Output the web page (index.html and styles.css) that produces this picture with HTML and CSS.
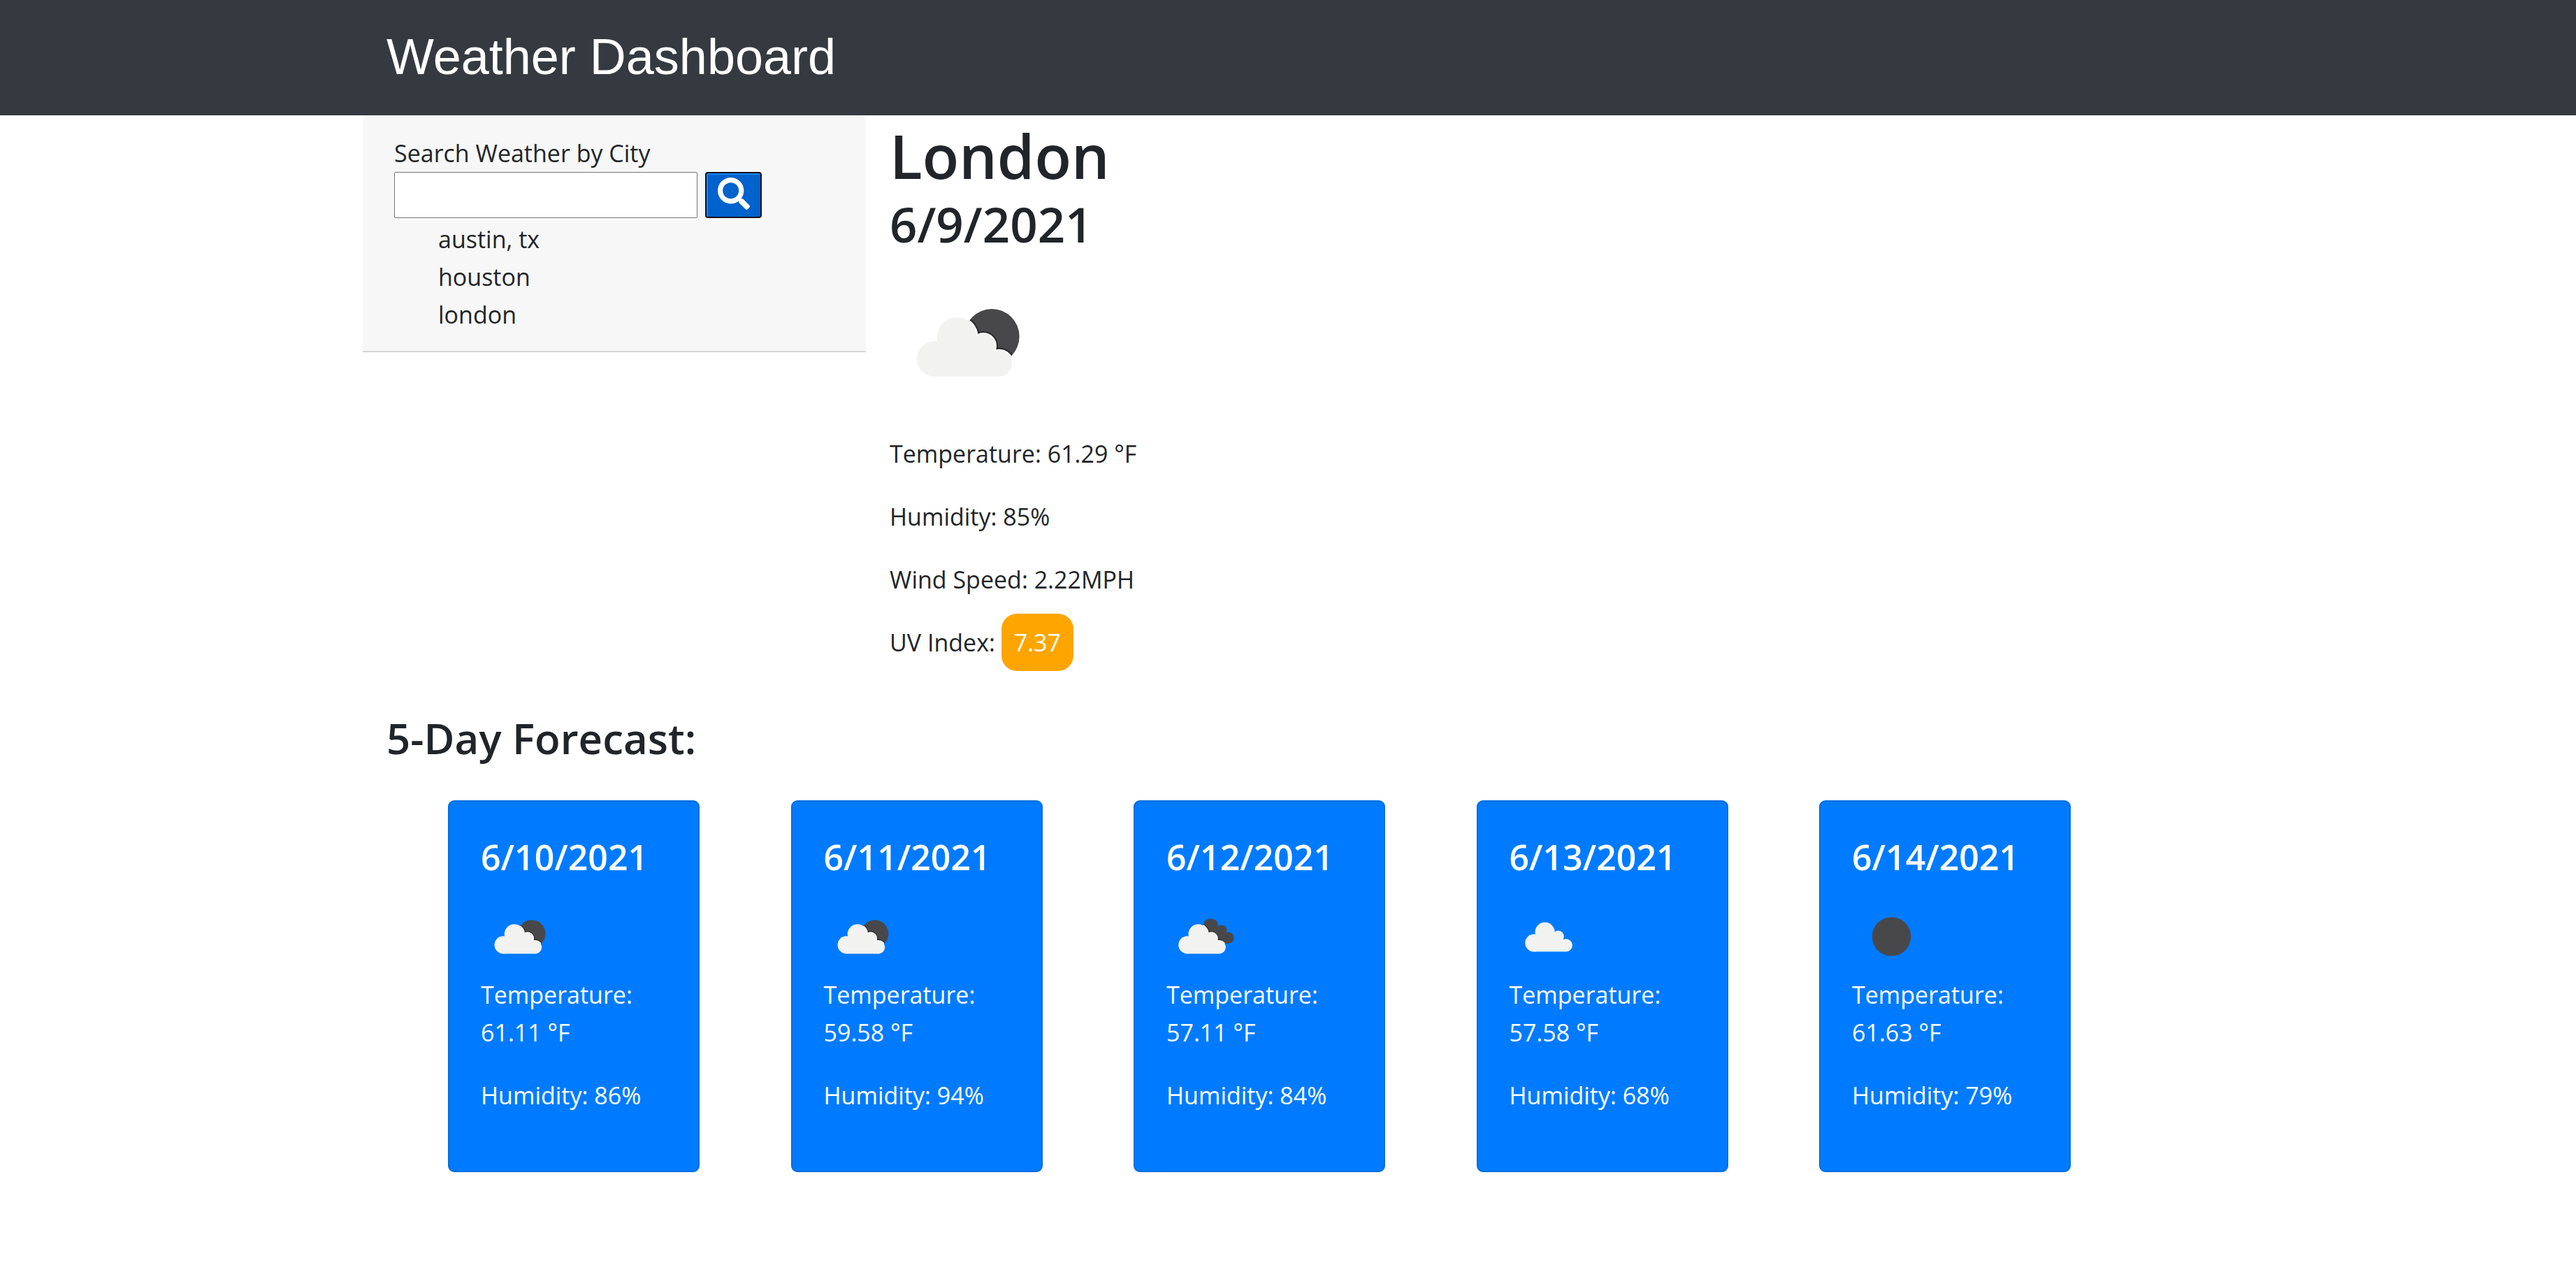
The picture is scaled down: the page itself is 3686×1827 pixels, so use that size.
FILE: index.html
```html
<!DOCTYPE html>
<html lang="en">
<head>
<meta charset="utf-8">
<meta name="viewport" content="width=device-width, initial-scale=1">
<title>Weather Dashboard</title>
<link rel="stylesheet" href="styles.css">
</head>
<body>
<svg class="defs" aria-hidden="true">
  <defs>
    <g id="cloud-shape">
      <circle cx="28.6" cy="60.6" r="11.2"/>
      <circle cx="42.7" cy="46.8" r="12.6"/>
      <circle cx="59.6" cy="52.4" r="7.4"/>
      <circle cx="69.6" cy="63.6" r="8.2"/>
      <path d="M28.6 71.8V50h30l8 6 3 0V71.8z"/>
    </g>
    <g id="back-cloud">
      <circle cx="56.6" cy="36.6" r="9.7"/>
      <circle cx="70.6" cy="41.8" r="6.6"/>
      <circle cx="79" cy="51.6" r="7.2"/>
      <path d="M50 40h22l7 6v12.8H60z"/>
    </g>
    <clipPath id="sun-clip"><circle cx="65" cy="46.4" r="17.5"/></clipPath>
    <clipPath id="back-clip">
      <circle cx="56.6" cy="36.6" r="9.7"/>
      <circle cx="70.6" cy="41.8" r="6.6"/>
      <circle cx="79" cy="51.6" r="7.2"/>
      <path d="M50 40h22l7 6v12.8H60z"/>
    </clipPath>
    <symbol id="few-clouds" viewBox="0 0 100 100">
      <circle class="dark" cx="65" cy="46.4" r="17.5"/>
      <g clip-path="url(#sun-clip)">
        <use class="shade" href="#cloud-shape"/>
        <use class="rim" href="#cloud-shape"/>
      </g>
      <use class="light" href="#cloud-shape"/>
    </symbol>
    <symbol id="broken-clouds" viewBox="0 0 100 100">
      <use class="dark" href="#back-cloud"/>
      <g clip-path="url(#back-clip)">
        <use class="shade" href="#cloud-shape" x="-2"/>
        <use class="rim" href="#cloud-shape" x="-2"/>
      </g>
      <use class="light" href="#cloud-shape" x="-2"/>
    </symbol>
    <symbol id="cloudy" viewBox="0 0 100 100">
      <use class="light" href="#cloud-shape" x="2.5" y="-2.5"/>
    </symbol>
    <symbol id="clear" viewBox="0 0 100 100">
      <circle class="dark" cx="50.5" cy="50" r="24.8"/>
    </symbol>
  </defs>
</svg>

<header class="topbar">
  <div class="container"><h1 class="brand">Weather Dashboard</h1></div>
</header>

<main class="container">
  <div class="overview">
    <aside class="search">
      <form class="search-form">
        <label class="search-label" for="city">Search Weather by City</label>
        <div class="search-row">
          <input class="search-input" id="city" type="text">
          <button class="search-button" type="button" aria-label="Search">
            <svg class="search-icon" viewBox="0 0 512 512" aria-hidden="true"><path d="M505 442.7L405.3 343c-4.5-4.5-10.6-7-17-7H372c27.6-35.3 44-79.7 44-128C416 93.1 322.9 0 208 0S0 93.1 0 208s93.1 208 208 208c48.3 0 92.7-16.4 128-44v16.3c0 6.4 2.5 12.5 7 17l99.7 99.7c9.4 9.4 24.6 9.4 33.9 0l28.3-28.3c9.4-9.4 9.4-24.6.1-34zM208 336c-70.7 0-128-57.2-128-128 0-70.7 57.2-128 128-128 70.7 0 128 57.2 128 128 0 70.7-57.2 128-128 128z"/></svg>
          </button>
        </div>
      </form>
      <ul class="history">
        <li>austin, tx</li>
        <li>houston</li>
        <li>london</li>
      </ul>
    </aside>

    <section class="current">
      <h2 class="city">London</h2>
      <h3 class="today">6/9/2021</h3>
      <svg class="current-icon" role="img" aria-label="Few clouds"><use href="#few-clouds"/></svg>
      <p>Temperature: 61.29 °F</p>
      <p>Humidity: 85%</p>
      <p>Wind Speed: 2.22MPH</p>
      <p>UV Index: <span class="uv">7.37</span></p>
    </section>
  </div>

  <h2 class="forecast-title">5-Day Forecast:</h2>
  <section class="forecast">
    <article class="card">
      <h3 class="card-date">6/10/2021</h3>
      <svg class="card-icon" role="img" aria-label="Few clouds"><use href="#few-clouds"/></svg>
      <p>Temperature: 61.11 °F</p>
      <p>Humidity: 86%</p>
    </article>
    <article class="card">
      <h3 class="card-date">6/11/2021</h3>
      <svg class="card-icon" role="img" aria-label="Few clouds"><use href="#few-clouds"/></svg>
      <p>Temperature: 59.58 °F</p>
      <p>Humidity: 94%</p>
    </article>
    <article class="card">
      <h3 class="card-date">6/12/2021</h3>
      <svg class="card-icon" role="img" aria-label="Broken clouds"><use href="#broken-clouds"/></svg>
      <p>Temperature: 57.11 °F</p>
      <p>Humidity: 84%</p>
    </article>
    <article class="card">
      <h3 class="card-date">6/13/2021</h3>
      <svg class="card-icon" role="img" aria-label="Cloudy"><use href="#cloudy"/></svg>
      <p>Temperature: 57.58 °F</p>
      <p>Humidity: 68%</p>
    </article>
    <article class="card">
      <h3 class="card-date">6/14/2021</h3>
      <svg class="card-icon" role="img" aria-label="Clear sky"><use href="#clear"/></svg>
      <p>Temperature: 61.63 °F</p>
      <p>Humidity: 79%</p>
    </article>
  </section>
</main>
</body>
</html>
```
FILE: styles.css
```css
*, *::before, *::after { box-sizing: border-box; }

body {
  margin: 0;
  background: #fff;
  color: #212529;
  font: 400 34px/54px "Open Sans", "Noto Sans", sans-serif;
}

h1, h2, h3, p, ul { margin: 0; }
h2, h3 { font-weight: 600; }
p { margin-bottom: 36px; }

.defs { position: absolute; width: 0; height: 0; }
.dark { fill: #48484a; }
.light { fill: #f2f2f1; }
.shade { fill: none; stroke: #1c1c1e; stroke-opacity: 0.6; stroke-width: 4; }
.rim { fill: none; stroke: #fff; stroke-width: 2; }

.container {
  max-width: 2648px;
  margin: 0 auto;
}

.topbar { background: #343a40; }

.brand {
  padding: 38px 34px 41px;
  color: #fff;
  font: 400 72px/86px "Liberation Sans", Arial, sans-serif;
}

.overview { display: flex; align-items: flex-start; }

.search {
  flex: 0 0 720px;
  padding: 27px 45px 25px;
  background: #f7f7f7;
  border-bottom: 2px solid #d5d5d5;
  border-radius: 9px 9px 0 0;
}

.search-label { display: block; }
.search-row { display: flex; gap: 11px; }

.search-input {
  width: 434px;
  height: 66px;
  padding: 2px 5px;
  border: 1px solid #767676;
  border-radius: 2px;
  background: #fff;
  font: inherit;
}

.search-button {
  display: flex;
  align-items: center;
  justify-content: center;
  width: 81px;
  height: 66px;
  padding: 0 0 4px;
  border: 2px solid #101010;
  border-radius: 4px;
  background: #0062cc;
  box-shadow: inset 2px 2px 0 #1a86ff;
}

.search-icon { width: 46px; height: 46px; fill: #fff; }

.history {
  padding: 3px 0 0 63px;
  list-style: none;
}

.current { flex: 1; padding: 4px 34px 0; }
.city { font-size: 86px; line-height: 108px; }
.today { font-size: 69px; line-height: 86px; }
.current-icon { display: block; width: 225px; height: 225px; margin: 14px 0 20px; }

.uv {
  display: inline-block;
  margin: -14px 0;
  padding: 14px 18px;
  border-radius: 22px;
  background: #ffa500;
  color: #fff;
}

.forecast-title { padding: 38px 34px 53px; font-size: 60px; line-height: 72px; }

.forecast {
  display: flex;
  justify-content: space-between;
  padding: 0 204px 0 122px;
}

.card {
  width: 360px;
  padding: 45px 45px 9px;
  border: 2px solid #006ee0;
  border-radius: 9px;
  background: #007bff;
  color: #fff;
}

.card p:last-child { margin-bottom: 72px; }
.card-date { font-size: 50px; line-height: 68px; }
.card-icon { display: block; width: 112px; height: 112px; margin: 24px 0 0; }
```
